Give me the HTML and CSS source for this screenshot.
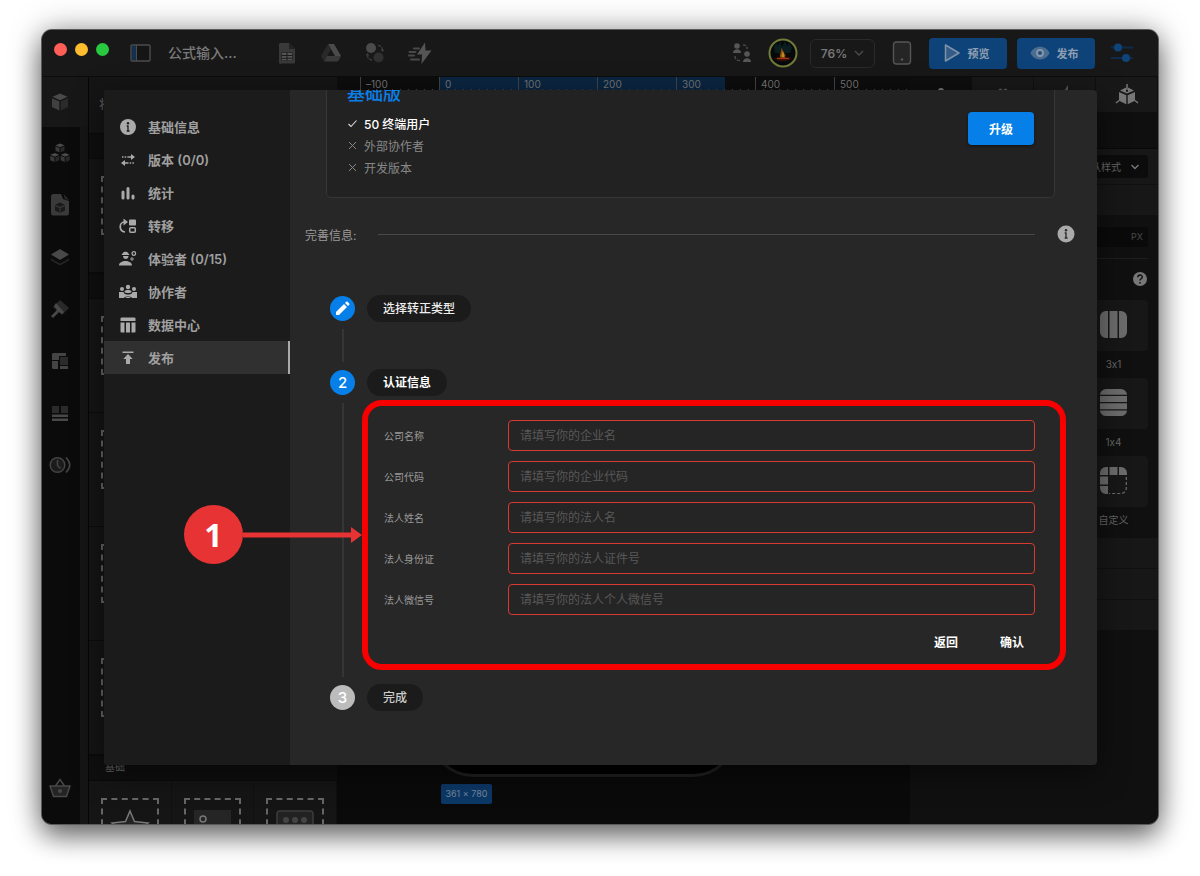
FILE: index.html
```html
<!DOCTYPE html>
<html lang="zh-CN">
<head>
<meta charset="utf-8">
<title>公式输入</title>
<link rel="stylesheet" href="styles.css">
</head>
<body>
<div class="window">
  <header class="topbar">
    <div class="lights"><i class="light close"></i><i class="light min"></i><i class="light max"></i></div>
    <svg class="icon-panel" width="22" height="20" viewBox="0 0 22 20"><rect x="1" y="2" width="19" height="16" rx="1" fill="#151515" stroke="#4c4c4c" stroke-width="1.4"/><rect x="2" y="3" width="4" height="14" fill="#12304f"/><path d="M6.5 2v16" stroke="#4c4c4c"/></svg>
    <h1 class="project">公式输入...</h1>
    <nav class="tools">
      <svg width="24" height="24" viewBox="0 0 24 24"><path fill="#393939" d="M5 2h9l6 6v13a1.500 1.500 0 0 1-1.500 1.500h-12A1.500 1.500 0 0 1 4 21V3.500A1.500 1.500 0 0 1 5 2z"/><path fill="#222" d="M14 2l6 6h-6z"/><path fill="#1b1b1b" d="M6.500 11.500h11v8h-11z"/><path fill="#555" d="M7 12h4.500v2H7zM12.500 12H17v2h-4.500zM7 15h4.500v1.800H7zM12.500 15H17v1.800h-4.500zM7 17.700h4.500v1.500H7zM12.500 17.700H17v1.500h-4.500z"/></svg>
      <svg width="24" height="24" viewBox="0 0 24 24"><path fill="#4b4b4b" d="M9 3h6l7 12h-6z"/><path fill="#292929" d="M9 3l3 5.200-7 12.300L2 15z"/><path fill="#3a3a3a" d="M8 15h14l-3 5.500H5z"/></svg>
      <svg width="24" height="24" viewBox="0 0 24 24"><circle cx="8" cy="7" r="5" fill="#4b4b4b"/><circle cx="15.500" cy="16.500" r="5" fill="#303030"/><path d="M15 4.500c3 0 4.500 2 4.500 5M9 19c-3 0-4.500-2-4.500-5" fill="none" stroke="#3d3d3d" stroke-width="1.300" stroke-dasharray="3 1"/><path d="M17.500 8.500h4l-2 2.500zM2.500 14.500h4l-2-2.500z" fill="#3d3d3d"/></svg>
      <svg width="26" height="24" viewBox="0 0 26 24"><path fill="#555" d="M18 1.500L10 13.500h5L14.500 23 24.500 9.500h-6z"/><path d="M7 7.500h5M2.500 11h6M2 14.500h5M4 18.500h8" stroke="#484848" stroke-width="2" stroke-linecap="round"/></svg>
    </nav>
    <div class="actions">
      <svg class="people" width="22" height="22" viewBox="0 0 22 22"><g fill="#565656"><circle cx="6" cy="4" r="2.800"/><path d="M2 11c0-5 8-5 8 0z"/><circle cx="16" cy="12" r="2.800"/><path d="M12 20c0-5 8-5 8 0z"/></g><path d="M12 3c3 0 4 1 4 4M4 14c0 3 1.500 4.500 5 4.500" fill="none" stroke="#484848" stroke-width="1.500" stroke-dasharray="3 1.500"/></svg>
      <svg class="avatar" width="30" height="30" viewBox="0 0 30 30"><circle cx="15" cy="15" r="13.500" fill="#05090a" stroke="#737b39" stroke-width="2"/><path d="M6 9l2-4 2 3 2-5 2 6 3-6 2 5 2-3 3 5-2 5H7z" fill="#0a1d1f"/><path d="M6 20c6-2 12-2 18 0-3 4-15 5-18 0z" fill="#2c0e06"/><path d="M13 20c-3-3 1-5 0-10 3 3 3 6 4.500 6.500L17 20z" fill="#8a4a0c"/><path d="M9 20.500h12" stroke="#a93210" stroke-width="1.300"/><path d="M14 19c-1-2 .5-3 .5-6 2 3 2 5 1.500 6z" fill="#c18b2a"/></svg>
      <button class="zoom" type="button">76%<svg width="10" height="10" viewBox="0 0 10 10"><path d="M1 3l4 4 4-4" fill="none" stroke="#4d4d4d" stroke-width="1.300"/></svg></button>
      <svg class="device" width="20" height="24" viewBox="0 0 20 24"><rect x="1.500" y="1" width="17" height="22" rx="3" fill="#252525" stroke="#555" stroke-width="1.400"/><circle cx="10" cy="18.500" r="1.300" fill="#555"/></svg>
      <button class="cta" type="button"><svg width="18" height="20" viewBox="0 0 18 20"><path d="M2.500 2v16L16 10z" fill="#345c89" stroke="#8092a8" stroke-width="1.500" stroke-linejoin="round"/></svg>预览</button>
      <button class="cta" type="button"><svg width="20" height="16" viewBox="0 0 20 16"><path d="M.5 8C4-.5 16-.5 19.500 8 16 16.500 4 16.500.5 8z" fill="#4c6d92"/><circle cx="10" cy="8" r="3" fill="#26507f" stroke="#8797ab" stroke-width="1.800"/></svg>发布</button>
      <svg class="sliders" width="24" height="22" viewBox="0 0 24 22"><path d="M1 5.500h22M1 16h22" stroke="#0e2b49" stroke-width="2"/><circle cx="8" cy="5.500" r="4" fill="#0f4479"/><circle cx="16" cy="16" r="4" fill="#0f4479"/></svg>
    </div>
  </header>

  <main class="workspace">
    <nav class="rail">
      <span class="rail-item active"><svg width="20" height="20" viewBox="0 0 20 20"><path fill="#4a4a4a" d="M10 1.500l7.500 3.300L10 8.300 2.500 4.800z"/><path fill="#404040" d="M2 6.300l7.300 3.300v9L2 15z"/><path fill="#2b2b2b" d="M18 6.300l-7.300 3.300v9L18 15z"/></svg></span>
      <span class="rail-item"><svg width="22" height="22" viewBox="0 0 22 22"><g id="cube"><path fill="#4a4a4a" d="M11 1.500l4.500 1.800L11 5.300 6.500 3.300z"/><path fill="#3a3a3a" d="M6.500 4.200l4 1.800v4.500l-4-1.800z"/><path fill="#292929" d="M15.500 4.200l-4 1.800v4.500l4-1.800z"/></g><use href="#cube" x="-5.200" y="9.500"/><use href="#cube" x="5.200" y="9.500"/></svg></span>
      <span class="rail-item"><svg width="22" height="24" viewBox="0 0 22 24"><path fill="#3a3a3a" d="M4.500 1H12l2 5 6 2v12a2.500 2.500 0 0 1-2.500 2.500h-13A2.500 2.500 0 0 1 2 20V3.500A2.500 2.500 0 0 1 4.500 1z"/><path fill="#2c2c2c" d="M14.500 1l5.500 6-4-1z"/><path fill="#1a1a1a" d="M11 9.500l5 2.200-5 2.200-5-2.200zM6 13l4.500 2v4.800L6 17.500zM16 13l-4.500 2v4.800l4.500-2.300z"/></svg></span>
      <span class="rail-item"><svg width="20" height="20" viewBox="0 0 20 20"><path fill="#242424" d="M1 11.500l9 5 9-5v2l-9 5-9-5z"/><path fill="#484848" d="M10 2l9 5.500-9 5.500-9-5.500z"/></svg></span>
      <span class="rail-item"><svg width="20" height="20" viewBox="0 0 20 20"><path fill="#292929" d="M10 1l9 8-7 7-9-8z"/><path fill="#484848" d="M6 4l8 9-2 2-3-2-6 6-2-2 6-6-3-4z"/></svg></span>
      <span class="rail-item"><svg width="18" height="18" viewBox="0 0 18 18"><path fill="#444" d="M2 1h13v3H8v4H1V2zM1 9h6v8H2l-1-1zM9 14h8v3H9z"/><rect x="9" y="5" width="8" height="8" fill="#2b2b2b"/></svg></span>
      <span class="rail-item"><svg width="18" height="18" viewBox="0 0 18 18"><path fill="#2b2b2b" d="M1 2h7v7H1zM10 2h7v7h-7z"/><path fill="#484848" d="M1 10.500h16V13H1zM1 14.500h16V17H1z"/></svg></span>
      <span class="rail-item"><svg width="22" height="18" viewBox="0 0 22 18"><circle cx="8.500" cy="9" r="7.300" fill="#1b1b1b" stroke="#444" stroke-width="1.500"/><path d="M8.500 4v5.500l3 3M17 1.500c5 5 5 10 0 15" fill="none" stroke="#444" stroke-width="1.600"/></svg></span>
      <span class="rail-item basket"><svg width="22" height="20" viewBox="0 0 22 20"><path fill="#242424" stroke="#484848" stroke-width="1.500" stroke-linejoin="round" d="M1 8h20l-3.500 10.500h-13z"/><path d="M6.500 8L11 1.500 15.500 8" fill="none" stroke="#484848" stroke-width="1.500"/><circle cx="11" cy="13" r="2" fill="#484848"/></svg></span>
    </nav>

    <aside class="library">
      <div class="library-title">将</div>
      <div class="group-head"></div>
      <div class="tiles"><div class="tile"><div class="drop"></div></div></div>
      <div class="group-head"></div>
      <div class="tiles"><div class="tile"><div class="drop"></div></div></div>
      <div class="tiles"><div class="tile"><div class="drop"></div></div></div>
      <div class="tiles"><div class="tile"><div class="drop"></div></div></div>
      <div class="tiles"><div class="tile"><div class="drop"></div></div></div>
      <div class="group-head">基础</div>
      <div class="tiles">
        <div class="tile"><div class="drop"><svg width="40" height="40" viewBox="0 0 40 40"><path d="M20 3l4.500 10.500L38 15l-10 8 3 12-11-6-11 6 3-12-10-8 13.500-1.500z" fill="#222" stroke="#777" stroke-width="1.500"/></svg></div></div>
        <div class="tile"><div class="drop"><svg width="40" height="40" viewBox="0 0 40 40"><rect x="2" y="2" width="37" height="36" fill="#252525"/><circle cx="11" cy="11" r="3" fill="none" stroke="#777" stroke-width="1.500"/><path d="M2 34l12-10 8 6 12-13 5 5" fill="none" stroke="#777"/></svg></div></div>
        <div class="tile"><div class="drop"><svg width="40" height="40" viewBox="0 0 40 40"><rect x="2" y="3" width="36" height="34" rx="3" fill="#222" stroke="#3c3c3c" stroke-width="1.500"/><g fill="#444"><circle cx="11" cy="12" r="3"/><circle cx="20" cy="12" r="3"/><circle cx="29" cy="12" r="3"/></g></svg></div></div>
      </div>
    </aside>

    <section class="canvas">
      <div class="ruler"><span>–100</span><span>0</span><span>100</span><span>200</span><span>300</span><span>400</span><span>500</span></div>
      <div class="phone"></div>
      <div class="size">361 × 780</div>
    </section>

    <aside class="inspector">
      <div class="tabs">
        <span class="tab on"><svg width="20" height="20" viewBox="0 0 20 20"><circle cx="10" cy="6" r="3" fill="#777"/></svg></span>
        <span class="tab"><svg width="20" height="20" viewBox="0 0 20 20"><circle cx="7.500" cy="5.500" r="2" fill="#555"/><circle cx="12.500" cy="5.500" r="2" fill="#555"/></svg></span>
        <span class="tab"><svg width="20" height="20" viewBox="0 0 20 20"><path d="M13 0L5 12h4v7l6-10h-2z" fill="#555"/></svg></span>
        <span class="tab"><svg width="24" height="24" viewBox="0 0 24 24"><path fill="#777" d="M11 4.500v4.200h2V4.500l6 3-7 3-7-3zM4 9l7.300 3.200v9L4 17.800zM20 9l-7.300 3.200v9l7.300-3.400z"/><path d="M12 1v6M4 17.500l-3 2.500M20 17.500l3 2.500" stroke="#777" stroke-width="1.500"/></svg></span>
      </div>
      <div class="blank"></div>
      <div class="row style-row"><button class="style-select" type="button">默认样式<svg width="10" height="10" viewBox="0 0 10 10"><path d="M1.500 3L5 6.500 8.500 3" fill="none" stroke="#777" stroke-width="1.400"/></svg></button></div>
      <div class="row"></div>
      <div class="layouts">
        <div class="px">PX</div>
        <hr class="sep">
        <svg class="help" width="16" height="16" viewBox="0 0 16 16"><circle cx="8" cy="8" r="7" fill="#777"/><path d="M5.800 6.300c0-3 4.500-3 4.500-.2 0 1.700-2.300 1.700-2.300 3.400" fill="none" stroke="#111" stroke-width="1.400"/><circle cx="8" cy="11.800" r=".9" fill="#111"/></svg>
        <figure><div class="shape"><svg width="27" height="27" viewBox="0 0 27 27"><path fill="#6c6c6c" d="M6 0h2v27H6a6 6 0 0 1-6-6V6a6 6 0 0 1 6-6zM9.500 0h8v27h-8zM19 0h2a6 6 0 0 1 6 6v15a6 6 0 0 1-6 6h-2z"/></svg></div><figcaption>3x1</figcaption></figure>
        <figure><div class="shape"><svg width="27" height="27" viewBox="0 0 27 27"><path fill="#6c6c6c" d="M6 0h15a6 6 0 0 1 6 5.700H0A6 6 0 0 1 6 0zM0 7h27v6H0zM0 14.200h27v6H0zM0 21.400h27A6 6 0 0 1 21 27H6a6 6 0 0 1-6-5.600z"/></svg></div><figcaption>1x4</figcaption></figure>
        <figure><div class="shape"><svg width="27" height="27" viewBox="0 0 27 27"><path fill="#6c6c6c" d="M6 0h2v8H0V6a6 6 0 0 1 6-6zM9.500 0h8v8h-8zM19 0h2a6 6 0 0 1 6 6v2h-8zM0 9.500h8v8H0zM0 19h8v8H6a6 6 0 0 1-6-6z"/><path d="M26.300 10v11a5.500 5.500 0 0 1-5.500 5.500H9" fill="none" stroke="#6c6c6c" stroke-width="1.200" stroke-dasharray="3 2"/></svg></div><figcaption>自定义</figcaption></figure>
      </div>
      <div class="row"></div>
      <div class="row"></div>
      <div class="row"></div>
    </aside>
  </main>

  <div class="dialog" role="dialog" aria-label="发布">
    <nav class="menu">
      <button type="button"><svg width="18" height="18" viewBox="0 0 18 18"><circle cx="9" cy="9" r="8" fill="#aaa"/><circle cx="9" cy="5.200" r="1.200" fill="#1b1b1b"/><path d="M7.700 8H9v5M7.700 13h2.800" stroke="#1b1b1b" stroke-width="1.300" fill="none"/></svg>基础信息</button>
      <button type="button"><svg width="18" height="18" viewBox="0 0 18 18"><path d="M3 6h7M8 12h7" stroke="#aaa" stroke-width="1.300" stroke-dasharray="1.500 1.200"/><path d="M10 6h3M5 12h3" stroke="#aaa" stroke-width="1.300"/><path d="M12 3l4 3-4 3zM6 9l-4 3 4 3z" fill="#aaa"/></svg>版本 (0/0)</button>
      <button type="button"><svg width="18" height="18" viewBox="0 0 18 18"><path d="M4 8v6M9 4.500v9.500M14 12v2" stroke="#aaa" stroke-width="3" stroke-linecap="round"/></svg>统计</button>
      <button type="button"><svg width="18" height="18" viewBox="0 0 18 18"><path d="M6 15C-.5 14 0 5 5.500 5" fill="none" stroke="#aaa" stroke-width="1.700"/><path d="M4.500 1.500L9 5 4.500 8.500z" fill="#aaa"/><rect x="10" y="2.500" width="7" height="6" rx="1" fill="#aaa"/><rect x="10.700" y="10.700" width="5.600" height="4.600" rx="1" fill="none" stroke="#aaa" stroke-width="1.500"/></svg>转移</button>
      <button type="button"><svg width="18" height="18" viewBox="0 0 18 18"><path fill="#aaa" d="M0 15.500c0-6 13-6 13 0zM3.500 3.500c1-2.500 5-2.500 6 0l1 1.500h-8zM4 6h5.500c0 4-5.500 4-5.500 0z"/><circle cx="14.800" cy="3.500" r="1.800" fill="none" stroke="#aaa" stroke-width="1.300"/><circle cx="13" cy="9" r="1.200" fill="none" stroke="#aaa"/></svg>体验者 (0/15)</button>
      <button type="button"><svg width="18" height="18" viewBox="0 0 18 18"><g fill="#aaa"><circle cx="3" cy="6" r="2"/><circle cx="9" cy="4" r="2.200"/><circle cx="15" cy="6" r="2"/><path d="M0 15V9h4.500c.5 2 2 2.500 4.500 2.500S13 11 13.500 9H18v6h-5c0-2-8-2-8 0zM5.500 8.500c0-2 7-2 7 0s-7 2-7 0z"/><path d="M6 15c1-1.500 5-1.500 6 0z"/></g></svg>协作者</button>
      <button type="button"><svg width="18" height="18" viewBox="0 0 18 18"><path fill="#aaa" d="M2.500 1.500h13a1 1 0 0 1 1 1V5h-15V2.500a1 1 0 0 1 1-1zM1.500 6.500h4v10h-3a1 1 0 0 1-1-1zM7 6.500h4v10H7zM12.500 6.500h4v9a1 1 0 0 1-1 1h-3z"/></svg>数据中心</button>
      <button type="button" class="current"><svg width="18" height="18" viewBox="0 0 18 18"><path fill="#aaa" d="M3.500 2.500h11v1.500h-11zM9 5l4.700 5H11v5H7v-5H4.300z"/></svg>发布</button>
    </nav>
    <div class="content">
      <section class="plan">
        <div>
          <h2 class="plan-name">基础版</h2>
          <ul class="features">
            <li class="yes"><svg width="11" height="11" viewBox="0 0 11 11"><path d="M1.500 6l2.500 2.500L9.500 2.500" fill="none" stroke="#ddd" stroke-width="1.100"/></svg>50 终端用户</li>
            <li><svg width="11" height="11" viewBox="0 0 11 11"><path d="M2 2l7 7M9 2L2 9" stroke="#888"/></svg>外部协作者</li>
            <li><svg width="11" height="11" viewBox="0 0 11 11"><path d="M2 2l7 7M9 2L2 9" stroke="#888"/></svg>开发版本</li>
          </ul>
        </div>
        <button class="upgrade" type="button">升级</button>
      </section>
      <div class="divider"><span>完善信息:</span><hr><svg width="18" height="18" viewBox="0 0 18 18"><circle cx="9" cy="9" r="8.500" fill="#aaa"/><circle cx="9" cy="5.200" r="1.200" fill="#272727"/><path d="M7.700 8H9v5M7.700 13h2.800" stroke="#272727" stroke-width="1.300" fill="none"/></svg></div>
      <ol class="steps">
        <li class="step short">
          <div class="marker"><span class="dot"><svg width="15" height="15" viewBox="0 0 15 15"><path fill="#fff" d="M1 14v-3l8-8 3 3-8 8zM10 2l1.200-1.200a1 1 0 0 1 1.400 0l1.600 1.600a1 1 0 0 1 0 1.400L13 5z"/></svg></span></div>
          <div class="step-body"><span class="pill">选择转正类型</span></div>
        </li>
        <li class="step">
          <div class="marker"><span class="dot">2</span></div>
          <div class="step-body"><span class="pill strong">认证信息</span>
            <form class="form">
              <label for="f1">公司名称</label><input id="f1" type="text" placeholder="请填写你的企业名">
              <label for="f2">公司代码</label><input id="f2" type="text" placeholder="请填写你的企业代码">
              <label for="f3">法人姓名</label><input id="f3" type="text" placeholder="请填写你的法人名">
              <label for="f4">法人身份证</label><input id="f4" type="text" placeholder="请填写你的法人证件号">
              <label for="f5">法人微信号</label><input id="f5" type="text" placeholder="请填写你的法人个人微信号">
              <div class="form-actions"><button type="button">返回</button><button type="button">确认</button></div>
            </form>
          </div>
        </li>
        <li class="step last">
          <div class="marker"><span class="dot off">3</span></div>
          <div class="step-body"><span class="pill dim">完成</span></div>
        </li>
      </ol>
    </div>
    <div class="callout"><span class="callout-number">1</span><svg width="119" height="16" viewBox="0 0 119 16"><path fill="#e73333" d="M0 5.500h108V0l11 8-11 8v-5.500H0z"/></svg></div>
  </div>
</div>
</body>
</html>
```
FILE: styles.css
```css
* { box-sizing: border-box; }

body {
  margin: 0;
  height: 100vh;
  padding: 30px 42px 52px;
  background: #fff;
  color: #aaa;
  font-family: Inter, "Noto Sans CJK SC", sans-serif;
  font-size: 12px;
  font-feature-settings: "calt" 0;
  display: flex;
  overflow: hidden;
}

button { font-family: inherit; border: 0; padding: 0; color: inherit; background: none; }
h1, h2, ul, ol, figure, hr { margin: 0; padding: 0; }
ul, ol { list-style: none; }
svg { display: block; flex: none; }

.window {
  position: relative;
  flex: 1;
  min-width: 0;
  display: flex;
  flex-direction: column;
  border-radius: 10px;
  background: #0b0b0b;
  box-shadow: 0 0 0 1px #5a5a5a, 0 13px 26px rgba(0, 0, 0, .48), 0 0 32px rgba(0, 0, 0, .36);
}

/* top bar */
.topbar {
  height: 47px;
  flex: none;
  display: flex;
  align-items: center;
  padding: 0 24px 0 12px;
  background: #181818;
  border-bottom: 1px solid #0c0c0c;
  border-radius: 10px 10px 0 0;
}
.lights { display: flex; gap: 8px; padding-bottom: 7px; }
.light { width: 13px; height: 13px; border-radius: 50%; }
.close { background: #ff5f57; }
.min { background: #febc2e; }
.max { background: #28c840; }
.icon-panel { margin-left: 21px; }
.project { margin-left: 16px; padding-bottom: 3px; font-size: 14px; font-weight: 500; color: #7a7a7a; }
.tools { display: flex; gap: 20px; margin-left: 38px; }
.actions { margin-left: auto; display: flex; align-items: center; }
.people { margin-right: 15px; }
.avatar { margin-right: 12px; }
.zoom {
  width: 65px;
  height: 29px;
  border: 1px solid #2a2a2a;
  border-radius: 6px;
  display: flex;
  align-items: center;
  justify-content: center;
  gap: 7px;
  font-size: 12px;
  font-weight: 600;
  color: #777;
}
.device { margin: 0 17px; }
.cta {
  width: 78px;
  height: 31px;
  margin-right: 10px;
  padding-right: 4px;
  border-radius: 4px;
  background: #0d4379;
  color: #8f9fb2;
  font-size: 11px;
  font-weight: 700;
  display: flex;
  align-items: center;
  justify-content: center;
  gap: 7px;
}
.sliders { margin-left: 5px; }

/* workspace */
.workspace { flex: 1; min-height: 0; display: flex; overflow: hidden; border-radius: 0 0 10px 10px; }
.rail {
  width: 47px;
  flex: none;
  display: flex;
  flex-direction: column;
  background: linear-gradient(90deg, #0b0b0b 38px, #151515 38px);
  border-right: 1px solid #060606;
}
.rail-item { width: 36px; height: 52px; display: flex; align-items: center; justify-content: center; }
.rail-item.active { width: 46px; height: 50px; padding-right: 10px; background: #171717; }
.basket { margin-top: auto; margin-bottom: 10px; }

.library { width: 248px; flex: none; background: #151515; color: #666; overflow: hidden; }
.library-title { height: 56px; padding: 0 10px; line-height: 56px; font-size: 12px; }
.group-head {
  height: 26px;
  padding: 0 16px;
  line-height: 22px;
  font-size: 10px;
  background: #0f0f0f;
  border-bottom: 1px solid #0a0a0a;
  border-top: 1px solid #0a0a0a;
}
.tiles { height: 114px; display: grid; grid-template-columns: repeat(3, 1fr); border-bottom: 1px solid #0c0c0c; }
.tile { border-right: 1px solid #101010; padding: 17px 12px; }
.drop { height: 59px; border: 2px dashed #666; padding: 8px 0; display: flex; justify-content: center; }

.canvas { position: relative; flex: 1; min-width: 0; background: #0a0a0a; overflow: hidden; }
.ruler {
  height: 14px;
  padding-left: 23px;
  display: flex;
  overflow: hidden;
  background: linear-gradient(90deg, #0d0d0d 102px, #0b2642 102px 388px, #0d0d0d 388px);
}
.ruler span {
  flex: 0 0 79px;
  padding-left: 5px;
  border-left: 1px solid #444;
  font-size: 10px;
  line-height: 14px;
  color: #757575;
  background: repeating-linear-gradient(90deg, transparent 0 7px, #444 7px 8px) bottom / 100% 2px no-repeat;
}
.phone {
  position: absolute;
  left: 92px;
  bottom: 47px;
  width: 308px;
  height: 650px;
  border: 3px solid #202020;
  border-radius: 44px;
  background: #000;
}
.size {
  position: absolute;
  left: 104px;
  bottom: 20px;
  width: 51px;
  line-height: 20px;
  border-radius: 2px;
  background: #0c3866;
  color: #7488a0;
  font-size: 9px;
  text-align: center;
}

.inspector { width: 248px; flex: none; background: #101010; color: #666; }
.tabs { height: 35px; display: grid; grid-template-columns: repeat(4, 1fr); background: #181818; }
.tab { display: flex; align-items: center; justify-content: center; border-right: 1px solid #0f0f0f; }
.tab.on { background: #0e0e0e; }
.blank { height: 37px; background: #0f0f0f; border-bottom: 1px solid #080808; }
.row { height: 31px; background: #171717; border-bottom: 1px solid #101010; }
.style-row { height: 36px; padding: 6px 10px; display: flex; justify-content: flex-end; }
.style-select {
  width: 80px;
  height: 23px;
  padding: 0 8px;
  border-radius: 3px;
  background: #0c0c0c;
  font-size: 10px;
  display: flex;
  align-items: center;
  justify-content: flex-end;
  gap: 9px;
}
.layouts { height: 322px; padding: 11px 10px; display: flex; flex-direction: column; align-items: flex-end; }
.px { width: 100px; height: 20px; padding: 0 5px; line-height: 20px; border-radius: 3px; background: #0a0a0a; color: #4a4a4a; font-size: 9px; text-align: right; }
.sep { width: 100%; margin: 11px 0 12px; border: 0; border-top: 1px solid #1e1e1e; }
.help { margin-bottom: 13px; }
figure { width: 69px; text-align: center; }
.shape { height: 51px; border-radius: 4px; background: #171717; display: flex; align-items: center; justify-content: center; padding-bottom: 2px; }
figcaption { line-height: 27px; font-size: 10px; }

/* dialog */
.dialog {
  position: absolute;
  inset: 60px 61px 59px 62px;
  display: flex;
  border-radius: 4px;
  background: #272727;
  box-shadow: 0 8px 30px rgba(0, 0, 0, .5);
}
.menu { width: 186px; flex: none; padding-top: 20px; background: #1b1b1b; border-radius: 4px 0 0 4px; }
.menu button {
  width: 100%;
  height: 33px;
  padding: 0 15px;
  display: flex;
  align-items: center;
  gap: 11px;
  font-size: 13px;
  font-weight: 600;
  color: #a0a0a0;
}
.menu .current { background: #303030; border-right: 2px solid #aaa; }

.content { flex: 1; min-width: 0; overflow: hidden; padding: 0 42px 0 36px; }
.plan {
  margin-top: -20px;
  height: 128px;
  padding: 10px 20px;
  display: flex;
  justify-content: space-between;
  align-items: flex-start;
  background: #222;
  border: 1px solid #363636;
  border-radius: 5px;
}
.plan-name { font-size: 18px; line-height: 26px; font-weight: 500; color: #0b7fe8; }
.features { margin-top: 5px; }
.features li { display: flex; align-items: center; gap: 6px; height: 22px; color: #888; }
.features .yes { color: #fff; font-weight: 500; }
.upgrade {
  width: 66px;
  height: 33px;
  margin-top: 31px;
  border-radius: 4px;
  background: #0680e8;
  color: #fff;
  font-size: 12px;
  font-weight: 700;
  box-shadow: 0 1px 3px rgba(0, 0, 0, .5);
}
.divider { display: flex; align-items: center; margin: 27px -20px 0 -21px; color: #999; }
.divider span { width: 73px; }
.divider hr { flex: 1; border: 0; border-top: 1px solid #484848; }
.divider svg { margin: 0 0 0 22px; }

.steps { margin-top: 52px; padding: 0 20px 0 4px; }
.step { display: flex; gap: 12px; }
.step.short { height: 74px; }
.step:not(.short):not(.last) { height: 315px; }
.marker { width: 25px; display: flex; flex-direction: column; align-items: center; gap: 8px; padding: 1px 0 7px; }
.marker::after { content: ""; flex: 1; width: 2px; background: #353535; }
.last .marker::after { display: none; }
.dot {
  width: 25px;
  height: 25px;
  border-radius: 50%;
  background: #0680e8;
  color: #fff;
  font-size: 15px;
  font-weight: 500;
  display: flex;
  align-items: center;
  justify-content: center;
}
.dot.off { background: #bcbcbc; }
.step-body { flex: 1; min-width: 0; }
.pill {
  display: inline-block;
  padding: 0 16px;
  line-height: 27px;
  border-radius: 14px;
  background: #1b1b1b;
  color: #eee;
  font-weight: 500;
}
.pill.strong { font-weight: 700; color: #fff; }
.pill.dim { color: #ccc; }

.form {
  position: relative;
  margin: 24px 0 0 17px;
  display: grid;
  grid-template-columns: 124px 1fr;
  row-gap: 10px;
  align-items: center;
}
.form::after {
  content: "";
  position: absolute;
  inset: -20px -31px -12px -22px;
  border: 6px solid #f70000;
  border-radius: 20px;
  pointer-events: none;
}
.form label { font-size: 10px; color: #999; }
.form input {
  width: 100%;
  height: 31px;
  padding: 0 11px;
  border: 1px solid #d83a30;
  border-radius: 4px;
  background: #252525;
  color: #ddd;
  font-family: inherit;
  font-size: 12px;
}
.form input::placeholder { color: #585858; opacity: 1; }
.form-actions { grid-column: 1 / -1; display: flex; justify-content: flex-end; gap: 20px; }
.form-actions button { width: 46px; height: 33px; font-size: 12px; font-weight: 700; color: #fff; }

/* callout pointing at the form */
.callout { position: absolute; left: 80px; top: 415px; display: flex; align-items: center; }
.callout-number {
  width: 59px;
  height: 59px;
  border-radius: 50%;
  background: #e73333;
  color: #fff;
  font: 700 32px/59px "Noto Sans", sans-serif;
  text-align: center;
}
```
